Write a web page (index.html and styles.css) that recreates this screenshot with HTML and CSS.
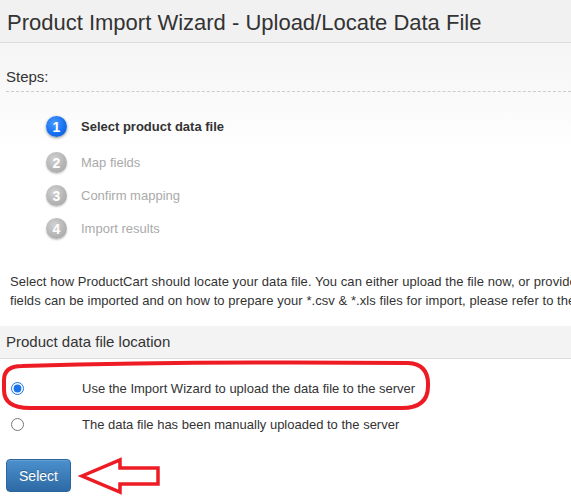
FILE: index.html
```html
<!DOCTYPE html>
<html>
<head>
<meta charset="utf-8">
<title>Product Import Wizard</title>
<link rel="stylesheet" href="styles.css">
</head>
<body>
<div class="page">
  <header class="header">
    <h1 class="title">Product Import Wizard - Upload/Locate Data File</h1>
  </header>
  <section class="steps">
    <div class="steps-label">Steps:</div>
    <ul class="step-list">
      <li class="step step-active"><span class="step-num">1</span><span class="step-text">Select product data file</span></li>
      <li class="step"><span class="step-num">2</span><span class="step-text">Map fields</span></li>
      <li class="step"><span class="step-num">3</span><span class="step-text">Confirm mapping</span></li>
      <li class="step"><span class="step-num">4</span><span class="step-text">Import results</span></li>
    </ul>
  </section>
  <p class="intro">Select how ProductCart should locate your data file. You can either upload the file now, or provide the location of a file that was previously uploaded to the server. For more information on which<br>fields can be imported and on how to prepare your *.csv &amp; *.xls files for import, please refer to the User Guide.</p>
  <div class="section-bar">Product data file location</div>
  <form class="options">
    <label class="option"><input class="radio" type="radio" name="loc" checked><span class="option-text">Use the Import Wizard to upload the data file to the server</span></label>
    <label class="option"><input class="radio" type="radio" name="loc"><span class="option-text">The data file has been manually uploaded to the server</span></label>
    <div class="actions"><button class="btn" type="button">Select</button></div>
  </form>
  <svg class="annot" width="571" height="503" viewBox="0 0 571 503" xmlns="http://www.w3.org/2000/svg">
    <path d="M22 366 Q 200 361 408 363 Q 429 364 428 386 Q 428 408 402 408 L 30 408 Q 4 408 4 390 L 4 380 Q 4 366 22 366 Z" fill="none" stroke="#ed1c24" stroke-width="4"/>
    <polygon points="82,476 120,460 120,468 158,468 158,484 120,484 120,492" fill="none" stroke="#ed1c24" stroke-width="3.5" stroke-linejoin="miter"/>
  </svg>
</div>
</body>
</html>
```
FILE: styles.css
```css
* { box-sizing: border-box; }
html, body { margin: 0; padding: 0; }
body {
  font-family: "Liberation Sans", Arial, sans-serif;
  color: #333;
  background: #fff;
  width: 571px;
  height: 503px;
  overflow: hidden;
}
.page { position: relative; width: 571px; height: 503px; overflow: hidden; }
.header {
  height: 43px;
  background: #f1f1f1;
  border-bottom: 1px solid #dcdcdc;
  padding: 5px 0 0 7px;
}
.title {
  margin: 0;
  font-size: 22px;
  font-weight: normal;
  line-height: 36px;
  color: #333;
  white-space: nowrap;
}
.steps {
  background: linear-gradient(#f5f5f5 0, #fafafa 60px, #fff 110px);
}
.steps-label {
  margin-left: 6px;
  padding: 25px 0 6px;
  font-size: 15px;
  line-height: 17px;
  border-bottom: 1px dashed #ccc;
}
.step-list {
  list-style: none;
  margin: 0;
  padding: 18px 0 0 46px;
}
.step {
  display: flex;
  align-items: center;
  gap: 14px;
  height: 33px;
  font-size: 13px;
  color: #aaa;
}
.step-active { margin-bottom: 3px; color: #333; font-weight: bold; }
.step-num {
  width: 21px;
  height: 21px;
  border-radius: 50%;
  background: radial-gradient(circle at 40% 35%, #d2d2d2 0, #b5b5b5 55%, #a3a3a3 100%);
  box-shadow: 0 1px 2px rgba(0,0,0,0.25);
  color: #fff;
  font-weight: bold;
  font-size: 14px;
  display: flex;
  align-items: center;
  justify-content: center;
  line-height: 1;
}
.step-active .step-num {
  background: radial-gradient(circle at 40% 35%, #4d9bff 0, #1570f0 55%, #0b58cf 100%);
  box-shadow: 0 1px 3px rgba(0,0,0,0.45);
}
.intro {
  margin: 27px 0 16px;
  padding-left: 10px;
  font-size: 13px;
  line-height: 19px;
  letter-spacing: 0.06px;
  white-space: nowrap;
  color: #333;
}
.section-bar {
  height: 33px;
  background: #f3f3f3;
  border-bottom: 1px solid #dcdcdc;
  padding-left: 6px;
  font-size: 15px;
  line-height: 32px;
  color: #333;
}
.options { padding-top: 11px; }
.option {
  display: flex;
  align-items: center;
  height: 36px;
  font-size: 13px;
  color: #333;
}
.radio {
  width: 13px;
  height: 13px;
  margin: 0 0 0 11px;
  accent-color: #1a73e8;
}
.option-text { margin-left: 58px; }
.actions { padding: 17px 0 0 6px; }
.btn {
  width: 65px;
  height: 33px;
  padding: 0;
  border: 1px solid #2b669a;
  border-radius: 4px;
  background: linear-gradient(#4b90cd, #2d6aa5);
  color: #fff;
  font-family: "Liberation Sans", Arial, sans-serif;
  font-size: 14px;
  text-shadow: 0 -1px 0 rgba(0,0,0,0.25);
  box-shadow: inset 0 1px 0 rgba(255,255,255,0.15);
}
.annot { position: absolute; left: 0; top: 0; pointer-events: none; }
```
